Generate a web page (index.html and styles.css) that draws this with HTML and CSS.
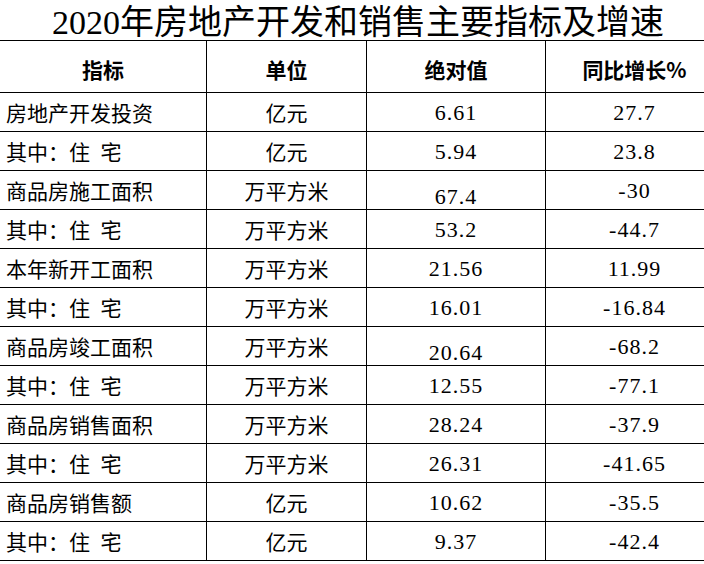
FILE: index.html
```html
<!DOCTYPE html>
<html lang="zh-CN">
<head>
<meta charset="utf-8">
<title>2020年房地产开发和销售主要指标及增速</title>
<link rel="stylesheet" href="styles.css">
</head>
<body>
<div class="sheet">
  <h1 class="title">2020年房地产开发和销售主要指标及增速</h1>
  <table class="data">
    <colgroup>
      <col class="c1"><col class="c2"><col class="c3"><col class="c4">
    </colgroup>
    <thead>
      <tr class="head">
        <th>指标</th><th>单位</th><th>绝对值</th><th>同比增长%</th>
      </tr>
    </thead>
    <tbody>
      <tr><td class="name">房地产开发投资</td><td class="unit">亿元</td><td class="num">6.61</td><td class="num">27.7</td></tr>
      <tr><td class="name">其中：住&ensp;宅</td><td class="unit">亿元</td><td class="num">5.94</td><td class="num">23.8</td></tr>
      <tr><td class="name">商品房施工面积</td><td class="unit">万平方米</td><td class="num low">67.4</td><td class="num">-30</td></tr>
      <tr><td class="name">其中：住&ensp;宅</td><td class="unit">万平方米</td><td class="num">53.2</td><td class="num">-44.7</td></tr>
      <tr><td class="name">本年新开工面积</td><td class="unit">万平方米</td><td class="num">21.56</td><td class="num">11.99</td></tr>
      <tr><td class="name">其中：住&ensp;宅</td><td class="unit">万平方米</td><td class="num">16.01</td><td class="num">-16.84</td></tr>
      <tr><td class="name">商品房竣工面积</td><td class="unit">万平方米</td><td class="num low">20.64</td><td class="num">-68.2</td></tr>
      <tr><td class="name">其中：住&ensp;宅</td><td class="unit">万平方米</td><td class="num">12.55</td><td class="num">-77.1</td></tr>
      <tr><td class="name">商品房销售面积</td><td class="unit">万平方米</td><td class="num">28.24</td><td class="num">-37.9</td></tr>
      <tr><td class="name">其中：住&ensp;宅</td><td class="unit">万平方米</td><td class="num">26.31</td><td class="num">-41.65</td></tr>
      <tr><td class="name">商品房销售额</td><td class="unit">亿元</td><td class="num">10.62</td><td class="num">-35.5</td></tr>
      <tr><td class="name">其中：住&ensp;宅</td><td class="unit">亿元</td><td class="num">9.37</td><td class="num">-42.4</td></tr>
    </tbody>
  </table>
</div>
</body>
</html>
```

FILE: styles.css
```css
html, body {
  margin: 0;
  padding: 0;
  background: #ffffff;
}

body {
  width: 704px;
  height: 564px;
  overflow: hidden;
  color: #000000;
  font-family: "Liberation Serif", "Noto Sans CJK SC", serif;
}

.sheet {
  width: 724px;
  margin-left: -1px;
}

.title {
  margin: 0;
  height: 40px;
  line-height: 46px;
  font-size: 34px;
  font-weight: normal;
  letter-spacing: 0;
  text-align: center;
  padding-right: 6px;
  font-family: "Liberation Serif", "Noto Sans CJK SC", serif;
  white-space: nowrap;
}

.data {
  border-collapse: collapse;
  table-layout: fixed;
  width: 724px;
}

.c1 { width: 207px; }
.c2 { width: 160px; }
.c3 { width: 179px; }
.c4 { width: 178px; }

.data th,
.data td {
  border: 1px solid #000000;
  padding: 0;
  white-space: nowrap;
  overflow: hidden;
}

.head th {
  height: 52px;
  font-family: "Noto Sans CJK SC", sans-serif;
  font-weight: 700;
  font-size: 21px;
  text-align: center;
  vertical-align: middle;
  padding-top: 5px;
  box-sizing: border-box;
}

.data tbody td {
  height: 39px;
  box-sizing: border-box;
  vertical-align: middle;
  font-size: 21px;
  line-height: 24px;
}

.name {
  text-align: left;
  padding-left: 6px !important;
  font-family: "Noto Sans CJK SC", sans-serif;
}

.unit {
  text-align: center;
  font-family: "Noto Sans CJK SC", sans-serif;
}

.num {
  text-align: center;
  font-family: "Liberation Serif", serif;
  font-size: 22px !important;
  letter-spacing: 1px;
  padding-top: 2px !important;
}

.num.low {
  vertical-align: bottom !important;
  padding-bottom: 0 !important;
}
```
